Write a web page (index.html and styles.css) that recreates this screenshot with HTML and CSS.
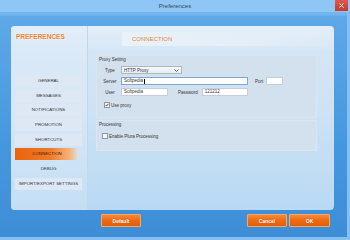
FILE: index.html
```html
<!DOCTYPE html>
<html lang="en">

<head>
    <meta charset="UTF-8">
    <title>Preferences</title>
    <link rel="stylesheet" href="styles.css">
</head>

<body>
<div class="window">
    <header class="titlebar">
        <span class="title">Preferences</span>
        <span class="close">
            <svg width="5" height="5" viewBox="0 0 5 5"><path d="M0.5 0.5L4.5 4.5M4.5 0.5L0.5 4.5" stroke="#fff" stroke-width="1"/></svg>
        </span>
    </header>

    <div class="frame">
        <div class="panel">
            <aside class="sidebar">
                <h1 class="brand">PREFERENCES</h1>
                <ul class="nav">
                    <li>GENERAL</li>
                    <li>MESSAGES</li>
                    <li>NOTIFICATIONS</li>
                    <li>PROMOTION</li>
                    <li>SHORTCUTS</li>
                    <li class="active">CONNECTION</li>
                    <li class="plain">DEBUG</li>
                    <li>IMPORT/EXPORT SETTINGS</li>
                </ul>
            </aside>

            <main class="content">
                <div class="page-head">CONNECTION</div>

                <div class="group proxy">
                    <div class="group-title">Proxy Setting</div>
                    <div class="row">
                        <label class="field-label">Type</label>
                        <div class="select">
                            <span>HTTP Proxy</span>
                            <svg width="5" height="3" viewBox="0 0 5 3"><path d="M0.5 0.5L2.5 2.5L4.5 0.5" fill="none" stroke="#444" stroke-width="0.8"/></svg>
                        </div>
                    </div>
                    <div class="row">
                        <label class="field-label">Server</label>
                        <div class="input server focused">Softpedia<span class="caret"></span></div>
                        <label class="inline-label port-label">Port</label>
                        <div class="input port"></div>
                    </div>
                    <div class="row">
                        <label class="field-label">User</label>
                        <div class="input user">Softpedia</div>
                        <label class="inline-label pass-label">Password</label>
                        <div class="input pass">121212</div>
                    </div>
                    <div class="check-row proxy-check">
                        <span class="checkbox checked">
                            <svg width="5" height="5" viewBox="0 0 5 5"><path d="M0.8 2.5L2 3.8L4.2 1" fill="none" stroke="#222" stroke-width="1"/></svg>
                        </span>
                        <span>Use proxy</span>
                    </div>
                </div>

                <div class="group processing">
                    <div class="group-title">Processing</div>
                    <div class="check-row plura-check">
                        <span class="checkbox"></span>
                        <span>Enable Plura Processing</span>
                    </div>
                </div>
            </main>
        </div>

        <footer class="footer">
            <button class="btn default">Default</button>
            <span class="spacer"></span>
            <button class="btn">Cancel</button>
            <button class="btn">OK</button>
        </footer>
    </div>
</div>
</body>

</html>
```

FILE: styles.css
```css
body {
    margin: 0;
    padding: 0;
    font-family: 'Liberation Sans', Arial, sans-serif;
    background-color: #4a9be0;
}

.window {
    width: 350px;
    height: 240px;
    overflow: hidden;
    display: flex;
    flex-direction: column;
}

.titlebar {
    height: 12px;
    background-color: #8ec6f6;
    position: relative;
    display: flex;
    justify-content: center;
    align-items: center;
}

.title {
    font-size: 6px;
    color: #3c4650;
}

.close {
    position: absolute;
    right: 2px;
    top: 0;
    width: 13px;
    height: 11px;
    background: linear-gradient(#e0584a, #c7382c);
    display: flex;
    align-items: center;
    justify-content: center;
}

.frame {
    flex: 1;
    padding: 14px 13px 0 11px;
    background: linear-gradient(#73b5ee 0, #73b5ee 3px, #5ea8e8 4px, #4597dd 60%, #3d8ed7 100%);
    border-left: 1px solid #86c0f2;
    border-right: 3px solid #86c0f2;
    border-bottom: 3px solid #86c0f2;
    margin-left: -1px;
}

.panel {
    height: 184px;
    border-radius: 4px;
    display: flex;
    overflow: hidden;
    background: linear-gradient(#e4eff9 0, #d4e6f5 14%, #d0e3f4 40%, #b9d9f4 100%);
}

/* left column */

.sidebar {
    width: 77px;
    border-right: 1px solid #c3d8eb;
    box-sizing: border-box;
    background: linear-gradient(#e2eef9 0, #d8e8f6 20%, #d6e7f6 50%, #c3def5 100%);
}

.brand {
    margin: 7px 0 0 5px;
    font-size: 6.5px;
    line-height: 8px;
    font-weight: bold;
    color: #f07d32;
    text-shadow: 0 0 1px #fff, 0 0 2px #fff;
}

.nav {
    list-style: none;
    margin: 34px 5px 0 4px;
    padding: 0;
    display: flex;
    flex-direction: column;
    gap: 2.7px;
}

.nav li {
    height: 12px;
    line-height: 12px;
    text-align: center;
    font-size: 4.4px;
    color: #2e343c;
    background-color: #dde8f4;
}

.nav li.plain {
    background-color: transparent;
}

.nav li.active {
    margin-right: 3px;
    background: linear-gradient(90deg, #ea630c 0, #f07a28 55%, #f6b27a 85%, #d5e5f4 100%);
    color: #3a1a08;
}

/* right column */

.content {
    flex: 1;
}

.page-head {
    margin: 6px 7px 0 34px;
    height: 14px;
    line-height: 14px;
    padding-left: 10px;
    font-size: 6px;
    color: #f0843e;
    background: linear-gradient(90deg, #e9f2fa 0, #e4eef8 60%, rgba(228, 238, 248, 0.2) 100%);
}

.group {
    margin-left: 8px;
    width: 221px;
    box-sizing: border-box;
    border: 1px solid #dbe5ef;
    background-color: #d3e1ee;
    font-size: 4.5px;
    color: #333;
}

.proxy {
    margin-top: 9px;
    height: 63px;
}

.processing {
    margin-top: 2px;
    height: 31px;
}

.group-title {
    padding-left: 2px;
    line-height: 5px;
    margin-top: 1px;
}

.row {
    display: flex;
    align-items: center;
    height: 8px;
    padding-left: 5px;
    margin-top: 3px;
}

.proxy .row:nth-of-type(2) {
    margin-top: 4px;
}

.field-label {
    width: 16px;
    text-align: center;
    margin-right: 3px;
}

.select {
    width: 61px;
    height: 8px;
    box-sizing: border-box;
    border: 1px solid #aab8c6;
    background: linear-gradient(#f8f9fa, #e8ecf0);
    display: flex;
    align-items: center;
    justify-content: space-between;
    padding: 0 2px 0 2px;
}

.input {
    height: 8px;
    box-sizing: border-box;
    border: 1px solid #c3cfdb;
    background-color: #fff;
    padding-left: 2px;
    line-height: 6px;
    display: flex;
    align-items: center;
}

.input.focused {
    border-color: #7ea7d6;
}

.caret {
    display: inline-block;
    width: 0.5px;
    height: 5px;
    background-color: #000;
    margin-left: 0.5px;
}

.server {
    width: 127px;
}

.port-label {
    margin-left: 7px;
    margin-right: 3px;
}

.port {
    width: 17px;
}

.user {
    width: 47px;
}

.pass-label {
    margin-left: 10px;
    margin-right: 4px;
}

.pass {
    width: 46px;
}

.check-row {
    display: flex;
    align-items: center;
    gap: 1px;
}

.proxy-check {
    margin: 6px 0 0 7px;
}

.plura-check {
    margin: 6px 0 0 5px;
}

.checkbox {
    width: 6px;
    height: 6px;
    box-sizing: border-box;
    border: 1px solid #8c98a4;
    background-color: #f4f6f8;
    display: flex;
    align-items: center;
    justify-content: center;
}

.checkbox svg {
    width: 4px;
    height: 4px;
}

/* buttons */

.footer {
    display: flex;
    margin-top: 4px;
    padding: 0 4px 0 90px;
    gap: 2px;
}

.spacer {
    flex: 1;
}

.btn {
    width: 40px;
    height: 13px;
    padding: 0;
    border: 1px solid #f7a766;
    border-radius: 1px;
    background: linear-gradient(#f58a3a 0, #ee6a12 50%, #e45e08 100%);
    color: #fff;
    font-family: 'Liberation Sans', Arial, sans-serif;
    font-size: 5px;
    font-weight: bold;
    text-shadow: 0 0 1px #a04000;
    cursor: pointer;
}

.btn:last-child {
    width: 41px;
}
```
